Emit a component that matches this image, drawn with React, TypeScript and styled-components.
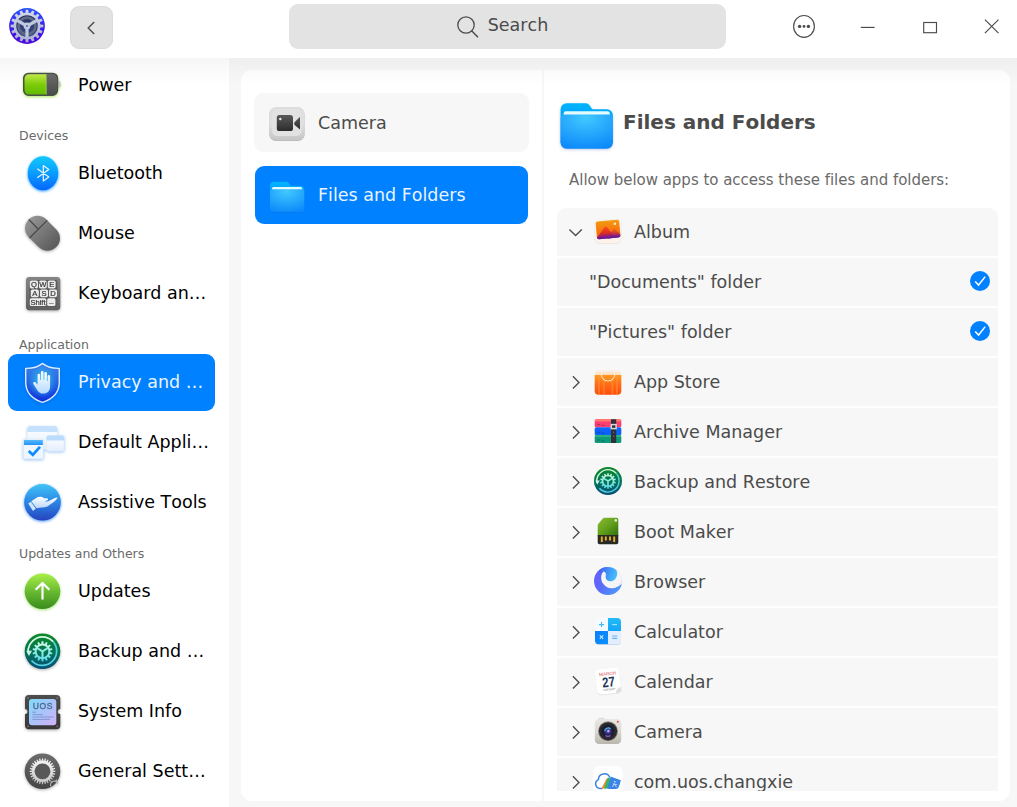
import React from "react";
import styled, { createGlobalStyle } from "styled-components";

const GlobalStyle = createGlobalStyle`
  * { box-sizing: border-box; }
  html, body { margin: 0; padding: 0; overflow: hidden; background: #fff; }
  body { font-family: "DejaVu Sans", sans-serif; font-size: 17.5px; font-kerning: none; color: #4b4b4b; }
  svg { display: block; flex: none; }
`;

/* ---------- Layout ---------- */

const Window = styled.div`
  display: flex;
  flex-direction: column;
  width: 1017px;
  height: 807px;
  background: #fff;
  overflow: hidden;
`;

const TitleBar = styled.header`
  display: flex;
  align-items: flex-start;
  height: 58px;
  flex: none;
  background: #fff;
  padding-left: 8px;
`;

const BackButton = styled.button`
  display: flex;
  align-items: center;
  justify-content: center;
  width: 43px;
  height: 43px;
  margin: 6px 0 0 24px;
  padding: 0 2px 0 0;
  border: 1px solid #dadada;
  border-radius: 9px;
  background: #e2e2e2;
`;

const SearchBox = styled.div`
  display: flex;
  align-items: center;
  justify-content: center;
  gap: 8px;
  width: 437px;
  height: 45px;
  margin: 4px 0 0 176px;
  padding: 0 11px 3px 0;
  border-radius: 9px;
  background: #e3e3e3;
`;

const WindowControls = styled.div`
  display: flex;
  align-items: center;
  gap: 39px;
  margin: 14px 0 0 66px;
`;

const Body = styled.div`
  position: relative;
  display: flex;
  height: 749px;
  &::before {
    content: "";
    position: absolute;
    inset: 0 0 auto 0;
    height: 26px;
    z-index: 2;
    pointer-events: none;
    background: linear-gradient(rgba(0, 0, 0, 0.034), rgba(0, 0, 0, 0));
  }
`;

const Sidebar = styled.nav`
  width: 229px;
  flex: none;
  height: 749px;
  overflow: hidden;
  background: #fff;
`;

const SidebarList = styled.div`
  display: flex;
  flex-direction: column;
  margin: -1px 14px 0 8px;
`;

const SectionLabel = styled.div<{ $tight?: boolean }>`
  height: ${(p) => (p.$tight ? 31 : 32)}px;
  padding: ${(p) => (p.$tight ? 13 : 14)}px 0 0 11px;
  font-size: 12.5px;
  line-height: 18px;
  white-space: nowrap;
  color: #6a6a6a;
`;

const Group = styled.div`
  display: flex;
  flex-direction: column;
  gap: 3px;
`;

const NavItem = styled.div<{ $active?: boolean }>`
  display: flex;
  height: 57px;
  padding: 4px 0 0 10px;
  gap: 12px;
  border-radius: 9px;
  line-height: 48px;
  white-space: nowrap;
  color: ${(p) => (p.$active ? "#eaf4ff" : "#000")};
  background: ${(p) => (p.$active ? "#0081ff" : "transparent")};
`;

const Content = styled.main`
  flex: 1;
  display: flex;
  padding: 12px 7px 6px 12px;
  background: #f7f7f7;
`;

const Panel = styled.div`
  display: flex;
  flex: 1;
  border-radius: 11px;
  background: #fff;
  overflow: hidden;
`;

const Categories = styled.section`
  display: flex;
  flex-direction: column;
  gap: 14px;
  width: 303px;
  flex: none;
  padding: 23px 13px 0;
  border-right: 2px solid #f7f7f7;
`;

const Category = styled.div<{ $active?: boolean }>`
  display: flex;
  align-items: flex-start;
  gap: 10px;
  height: ${(p) => (p.$active ? 58 : 59)}px;
  margin: ${(p) => (p.$active ? "0 0 0 1px" : "0 -1px 0 0")};
  width: ${(p) => (p.$active ? 273 : 275)}px;
  padding: ${(p) => (p.$active ? "8px 0 0 11px" : "9px 0 0 12px")};
  border-radius: 9px;
  line-height: 42px;
  color: ${(p) => (p.$active ? "#eaf4ff" : "#4b4b4b")};
  background: ${(p) => (p.$active ? "#0081ff" : "#f7f7f7")};
`;

const Detail = styled.section`
  display: flex;
  flex-direction: column;
  flex: 1;
  padding: 30px 12px 10px 13px;
`;

const DetailHeader = styled.div`
  display: flex;
  gap: 11px;
  height: 60px;
`;

const Title = styled.h1`
  margin: 0;
  font-size: 20px;
  line-height: 44px;
  font-weight: bold;
`;

const Hint = styled.p`
  margin: 10px 0 18px 12px;
  font-size: 15px;
  letter-spacing: -0.02px;
  line-height: 20px;
  color: #6a6a6a;
`;

const AppList = styled.div`
  display: flex;
  flex-direction: column;
  gap: 2px;
  flex: 1;
  min-height: 0;
  overflow: hidden;
  border-radius: 9px 9px 0 0;
`;

const AppRow = styled.div`
  display: flex;
  flex: none;
  height: 48px;
  padding-left: 11px;
  background: #f7f7f7;
  line-height: 48px;
`;

const AppIcon = styled.div`
  padding: 8px 10px 0 8px;
`;

const FolderRow = styled(AppRow)`
  justify-content: space-between;
  padding: 0 8px 0 32px;
`;

const CheckSlot = styled.div`
  padding-top: 13px;
`;

/* ---------- Shared drawings ---------- */

const polar = (cx: number, cy: number, r: number, deg: number) =>
  `${(cx + r * Math.cos((deg * Math.PI) / 180)).toFixed(2)} ${(cy + r * Math.sin((deg * Math.PI) / 180)).toFixed(2)}`;

function gearPath(cx: number, cy: number, outer: number, inner: number, teeth: number) {
  const step = 360 / teeth;
  let d = "";
  for (let i = 0; i < teeth; i++) {
    const a = i * step - 90;
    d += `${i ? "L" : "M"}${polar(cx, cy, inner, a - step * 0.3)}L${polar(cx, cy, outer, a - step * 0.2)}L${polar(cx, cy, outer, a + step * 0.2)}L${polar(cx, cy, inner, a + step * 0.3)}`;
  }
  return d + "Z";
}

type GradProps = { id: string; stops: string[]; diagonal?: boolean };
const Grad = ({ id, stops, diagonal }: GradProps) => (
  <linearGradient id={id} x1="0" y1="0" x2={diagonal ? "1" : "0"} y2="1">
    {stops.map((c, i) => (
      <stop key={i} offset={i / (stops.length - 1)} stopColor={c} />
    ))}
  </linearGradient>
);

const Glow = styled.svg<{ $glow: string }>`
  overflow: visible;
  filter: drop-shadow(0 1px 1.8px ${(p) => p.$glow});
`;

const Icon48 = ({ glow = "rgba(0,0,0,.32)", children }: { glow?: string; children: React.ReactNode }) => (
  <Glow $glow={glow} width="48" height="48" viewBox="0 0 48 48">{children}</Glow>
);

const Icon32 = ({ children }: { children: React.ReactNode }) => (
  <svg width="32" height="32" viewBox="0 0 32 32">{children}</svg>
);

/* ---------- Title bar icons ---------- */

const LogoSvg = styled.svg`
  margin-top: 7px;
`;

const AppLogo = () => (
  <LogoSvg width="38" height="38" viewBox="0 0 38 38">
    <defs>
      <Grad id="logoBg" stops={["#2b55ff", "#3a22ea", "#4b04dd"]} />
      <Grad id="logoGear" stops={["#d3d9ea", "#a9b0cf"]} />
      <Grad id="logoIn" stops={["#27335f", "#3c4a8c"]} />
    </defs>
    <circle cx="19" cy="19" r="17.9" fill="url(#logoBg)" />
    <path d={gearPath(19, 19, 16.4, 13.4, 16)} fill="url(#logoGear)" />
    <circle cx="19" cy="19" r="10.8" fill="url(#logoIn)" />
    <circle cx="19" cy="19" r="8.4" fill="none" stroke="#5f6a80" strokeWidth="2.6" />
    <g stroke="#c0c8de" strokeWidth="3.2">
      <path d="M19 19V30.5M19 19L9 13.3M19 19L29 13.3" />
    </g>
    <circle cx="19" cy="19" r="3.4" fill="#c3cbe2" />
    <circle cx="19" cy="19" r="1.1" fill="#5a68a8" />
  </LogoSvg>
);

const stroke = { fill: "none", stroke: "#4c4c4c", strokeWidth: 1.15 };

const SearchSvg = styled.svg`
  margin-top: 4px;
`;

const BackIcon = () => (
  <svg width="12" height="16" viewBox="0 0 12 16"><path d="M9.2 2L3.2 8L9.2 14" {...stroke} strokeWidth={1.4} /></svg>
);
const SearchIcon = () => (
  <SearchSvg width="24" height="24" viewBox="0 0 24 24">
    <circle cx="10" cy="10" r="8.2" {...stroke} strokeWidth={1.3} />
    <path d="M15.6 15.8L22 22.2" {...stroke} strokeWidth={1.5} />
  </SearchSvg>
);
const MenuIcon = () => (
  <svg width="24" height="26" viewBox="0 0 24 26">
    <ellipse cx="12" cy="12.4" rx="10.4" ry="10.9" {...stroke} />
    <g fill="#4c4c4c"><circle cx="7.6" cy="12.4" r="1.7" /><circle cx="12" cy="12.4" r="1.4" /><circle cx="16.4" cy="12.4" r="1.7" /></g>
  </svg>
);
const MinimizeIcon = () => (
  <svg width="24" height="26" viewBox="0 0 24 26"><path d="M5.8 13.4H19.6" {...stroke} /></svg>
);
const MaximizeIcon = () => (
  <svg width="24" height="26" viewBox="0 0 24 26"><rect x="5.7" y="8.5" width="12.8" height="10.2" {...stroke} /></svg>
);
const CloseIcon = () => (
  <svg width="24" height="26" viewBox="0 0 24 26"><path d="M3.9 5.6L17.5 19.2M17.5 5.6L3.9 19.2" {...stroke} /></svg>
);

/* ---------- Sidebar icons ---------- */

const PowerIcon = () => (
  <Icon48 glow="rgba(140,220,30,.7)">
    <defs><Grad id="batG" stops={["#c4ec4a", "#7ccc0a", "#62bb00"]} /><Grad id="batD" stops={["#6c6c6c", "#4a4a4a"]} /></defs>
    <g transform="translate(0 -1)">
      <path d="M40 20.5c2 .6 2.7 2 2.7 3.8s-.7 3.2-2.7 3.8z" fill="#c2c2c2" />
      <rect x="5.6" y="13.3" width="34" height="22" rx="5" fill="url(#batD)" stroke="#48504a" strokeWidth="1.2" />
      <path d="M11 14.2H28V34.5H11a4.4 4.4 0 0 1-4.4-4.4V18.6A4.4 4.4 0 0 1 11 14.2z" fill="url(#batG)" />
      <path d="M28.2 14.2v20.3" stroke="#a4df4b" strokeWidth=".8" />
    </g>
  </Icon48>
);
const BluetoothIcon = () => (
  <Icon48 glow="rgba(0,140,255,.85)">
    <defs><Grad id="bt" stops={["#12c9fb", "#0a9cff", "#0566ff"]} /></defs>
    <ellipse cx="25" cy="24.3" rx="15.2" ry="17" fill="url(#bt)" />
    <path d="M19.3 19.8L30.8 28L25.3 32V16.6L30.8 20.6L19.3 28.8" fill="none" stroke="#e9f7ff" strokeWidth="1.2" strokeLinejoin="round" />
  </Icon48>
);
const MouseIcon = () => (
  <Icon48>
    <defs><Grad id="mouse" stops={["#959595", "#777", "#5a5a5a"]} /></defs>
    <g transform="rotate(-45 24.5 24.3)">
      <rect x="12" y="4.8" width="25" height="39" rx="12.5" fill="url(#mouse)" />
      <path d="M12 18.5H37M24.5 4.8V18.5" stroke="#4b4b4b" strokeWidth="1.3" />
    </g>
  </Icon48>
);
const Key = ({ x, y, w, t }: { x: number; y: number; w: number; t: string }) => (
  <g>
    <rect x={x} y={y} width={w} height="7.8" rx="1.6" fill="#ececec" />
    <text x={x + w / 2} y={y + 6.6} fontSize="7.6" textAnchor="middle" fill="#333" stroke="#333" strokeWidth=".2" fontFamily="Liberation Sans">{t}</text>
  </g>
);
const KeyboardIcon = () => (
  <Icon48>
    <defs><Grad id="kb" stops={["#858585", "#5f5f5f"]} /></defs>
    <rect x="8" y="8" width="34.3" height="33.2" rx="3.4" fill="url(#kb)" />
    <rect x="11.4" y="11" width="28" height="27" rx="2" fill="#5c5c5c" />
    <Key x={11.8} y={11.6} w={8.2} t="Q" /><Key x={21} y={11.6} w={7.8} t="W" /><Key x={29.8} y={11.6} w={7.8} t="E" />
    <Key x={12.8} y={20.4} w={8} t="A" /><Key x={22} y={20.4} w={8} t="S" /><Key x={31} y={20.4} w={8} t="D" />
    <Key x={11.8} y={29.2} w={16.4} t="Shift" /><Key x={29.2} y={29.2} w={8.2} t="–" />
  </Icon48>
);
const PrivacyIcon = () => (
  <Icon48 glow="rgba(0,40,150,.2)">
    <defs>
      <Grad id="shield" stops={["#3a86e8", "#2263e2", "#0e2fdc"]} />
      <radialGradient id="shieldGlow" cx=".5" cy=".45" r=".5"><stop offset="0" stopColor="#32d2f5" /><stop offset="1" stopColor="#32b8f5" stopOpacity="0" /></radialGradient>
      <Grad id="hand" stops={["#ffffff", "#b6dbff"]} />
    </defs>
    <path d="M24.5 5.4C29 9 35 10.6 41.3 10.4V24C41.3 34.5 35 41 24.5 44.3C14 41 7.7 34.5 7.7 24V10.4C14 10.6 20 9 24.5 5.4Z" fill="url(#shield)" stroke="#d9eaff" strokeWidth="1.4" strokeLinejoin="round" />
    <path d="M24.5 8C29 11 34 12.6 39 12.4V24C39 33 34 38.5 24.5 41.8C15 38.5 10 33 10 24V12.4C15 12.6 20 11 24.5 8Z" fill="url(#shieldGlow)" />
    <path d="M19.6 25V16.6a1.3 1.3 0 0 1 2.5 0V22h.8V14.4a1.3 1.3 0 0 1 2.6 0V22h.8V15.3a1.3 1.3 0 0 1 2.6 0V23h.7V18a1.3 1.3 0 0 1 2.5 0V28.5C32.1 33 29.2 35.6 25.6 35.6C22.2 35.6 20.4 34.2 18.7 31.2L15.2 25.7C14.8 24.2 16.6 23.4 17.8 24.5L19.6 26.8Z" fill="url(#hand)" />
  </Icon48>
);
const DefaultAppsIcon = () => (
  <Icon48 glow="rgba(80,150,230,.5)">
    <defs><Grad id="win" stops={["#ffffff", "#e3eefd"]} /><Grad id="winBar" stops={["#58b9ff", "#2493fc"]} /></defs>
    <rect x="9.3" y="8" width="30" height="23.5" rx="3" fill="url(#win)" />
    <path d="M12.3 8H36.3a3 3 0 0 1 3 3V14H9.3V11a3 3 0 0 1 3-3z" fill="#c5e1fe" />
    <rect x="28.5" y="17.5" width="17.7" height="15.8" rx="2" fill="url(#win)" stroke="#d5e7fb" strokeWidth=".5" />
    <path d="M30.5 17.5H44.2a2 2 0 0 1 2 2V22.5H28.5V19.5a2 2 0 0 1 2-2z" fill="#bcdcfd" />
    <rect x="5.2" y="21.2" width="20.3" height="19.8" rx="2" fill="#eef6ff" stroke="#cfe3f8" strokeWidth=".6" />
    <path d="M6 22H24.8V27H6z" fill="url(#winBar)" />
    <path d="M10.7 33L14.8 36.8L22 28.8" fill="none" stroke="#0a8bff" strokeWidth="2.7" />
  </Icon48>
);
const AssistiveIcon = () => (
  <Icon48 glow="rgba(30,120,240,.75)">
    <defs><Grad id="assist" stops={["#40c4f8", "#2b85e4", "#2643bf"]} /><Grad id="palm" stops={["#ffffff", "#b9d6f8"]} /></defs>
    <circle cx="24.5" cy="24.3" r="18.3" fill="url(#assist)" />
    <path d="M13.3 23.3L19 19.4C22 18.2 24.5 19 27 20.4C29.2 20 30.5 20.7 30 22L26.5 23.5L29.8 23.6L36.8 20C38.2 19.4 39.8 19.2 39.2 20.6C37 23.8 33 26.2 29.5 28.4C26 29.8 22.5 29 18.6 30.2Z" fill="url(#palm)" />
    <path d="M10.2 25.4L12.8 23.8L17.8 30.6L15 33Z" fill="#cfe3fb" />
  </Icon48>
);
const UpdatesIcon = () => (
  <Icon48 glow="rgba(110,210,40,.65)">
    <defs><Grad id="upd" stops={["#a9ef48", "#69bb31", "#3a8b1d"]} /></defs>
    <circle cx="24.5" cy="24.3" r="17.8" fill="url(#upd)" />
    <path d="M24.5 32.5V16.6M17.6 22.8L24.5 16L31.4 22.8" fill="none" stroke="#fff" strokeWidth="2.2" />
  </Icon48>
);

const RestoreArt = ({ id, cx, cy, r }: { id: string; cx: number; cy: number; r: number }) => {
  const k = r / 17.8;
  return (
    <g transform={`translate(${cx} ${cy}) scale(${k})`}>
      <defs><Grad id={id} stops={["#0b8a28", "#037553", "#064f78"]} /><Grad id={id + "w"} stops={["#d9fbe6", "#52dbea"]} /></defs>
      <circle r="17.8" fill={`url(#${id})`} />
      <g fill="none" stroke="#8fe9e0" strokeWidth="1.7">
        <path d={`M${polar(0, 0, 14.4, 172)}A14.4 14.4 0 0 1 ${polar(0, 0, 14.4, 318)}`} stroke="#d9fbe6" />
        <path d={`M${polar(0, 0, 14.4, 318)}A14.4 14.4 0 0 1 ${polar(0, 0, 14.4, 140)}`} stroke="#58cfe0" />
        <path d="M0 0V7M0 0L-6 -3.6M0 0L6 -3.6" strokeWidth="2" />
      </g>
      <path d="M-16.2 -.6H-10.4L-13.6 4.8Z" fill="#c4f5e6" />
      <path fillRule="evenodd" d={gearPath(0, 0, 10, 7.8, 14) + "M5.9 0A5.9 5.9 0 1 0 -5.9 0A5.9 5.9 0 1 0 5.9 0Z"} fill={`url(#${id}w)`} />
    </g>
  );
};
const BackupIcon = () => (
  <Icon48><RestoreArt id="bk48" cx={24.5} cy={24.3} r={17.8} /></Icon48>
);
const SystemInfoIcon = () => (
  <Icon48>
    <defs><Grad id="uos" diagonal stops={["#7fdcf8", "#a9c4fb", "#d2b2f8"]} /><Grad id="chip" stops={["#4d4d4d", "#383838"]} /></defs>
    <path d="M11 8H38.3a4 4 0 0 1 4 4V22a2.4 2.4 0 0 0 0 5V38.3a4 4 0 0 1-4 4H11a4 4 0 0 1-4-4V27a2.4 2.4 0 0 0 0-5V12a4 4 0 0 1 4-4z" fill="url(#chip)" />
    <rect x="11" y="12" width="27.3" height="26.3" rx="3" fill="url(#uos)" />
    <text x="24.9" y="22" fontSize="8.6" letterSpacing=".6" textAnchor="middle" fill="#4b6c93" stroke="#4b6c93" strokeWidth=".35" fontFamily="Liberation Sans">UOS</text>
    <path d="M14.3 25.2H18M14.3 27.6H25M14.3 30H35.5M14.3 32.4H32" stroke="#7d92c9" strokeWidth=".9" />
    <g fill="#777"><circle cx="10" cy="11" r=".9" /><circle cx="39.3" cy="11" r=".9" /><circle cx="10" cy="39.3" r=".9" /><circle cx="39.3" cy="39.3" r=".9" /></g>
  </Icon48>
);
const GeneralIcon = () => (
  <Icon48>
    <defs><Grad id="gen" stops={["#6d6d6d", "#444"]} /><Grad id="genG" stops={["#f6f6f6", "#c4c4c4"]} /></defs>
    <circle cx="24.5" cy="24.3" r="17.8" fill="url(#gen)" />
    <path d={gearPath(24.5, 24.3, 12.9, 10.7, 28)} fill="url(#genG)" />
    <circle cx="24.5" cy="24.3" r="7.9" fill="#585858" />
    <path d="M32.8 39.4C32 37 33 34.6 35.4 34.2C37.8 33.8 39.5 35 39.8 36.6M33 34.4L34.4 35.6M38.8 32.5L37.8 34.4" fill="none" stroke="#b5b5b5" strokeWidth="1.1" />
  </Icon48>
);

/* ---------- Category icons ---------- */

const VideoIcon = () => (
  <svg width="42" height="44" viewBox="0 0 42 44">
    <defs><Grad id="vidBg" stops={["#dddddd", "#e0e0e0", "#c6c6c6"]} /><Grad id="vid" stops={["#5a5a5a", "#2c2c2c"]} /></defs>
    <rect x="3.2" y="6" width="35.4" height="33" rx="6.5" fill="#bcbcbc" />
    <rect x="3.2" y="5" width="35.4" height="33" rx="6.5" fill="url(#vidBg)" />
    <rect x="6.2" y="7" width="29.4" height="27" rx="5" fill="#e2e2e2" />
    <rect x="10.8" y="13" width="16.2" height="16" rx="2.6" fill="url(#vid)" />
    <path d="M28.3 20.5L34 14.7V27.5L28.3 22.8z" fill="url(#vid)" />
    <circle cx="14.3" cy="17" r="1.2" fill="#eee" />
  </svg>
);

const FolderArt = ({ id }: { id: string }) => (
  <>
    <defs>
      <Grad id={id + "b"} stops={["#00b4ff", "#0a86ee"]} />
      <radialGradient id={id} cx=".48" cy=".1" r=".95"><stop offset="0" stopColor="#42c8ff" /><stop offset="1" stopColor="#0b88fa" /></radialGradient>
    </defs>
    <path d="M6 0H24.5C28 0 29.2 2 30.5 4.2C31.3 5.6 32 6 33.5 6H46.5A6 6 0 0 1 52.5 12V40H0V6A6 6 0 0 1 6 0Z" fill={`url(#${id}b)`} />
    <path d="M3 16V10.5A2.5 2.5 0 0 1 5.5 8H47A2.5 2.5 0 0 1 49.5 10.5V16Z" fill="#e2fbff" />
    <path d="M0 14.5Q.3 11.6 3.5 11.2H49Q52.2 11.6 52.5 14.5V40A6 6 0 0 1 46.5 46H6A6 6 0 0 1 0 40Z" fill={`url(#${id})`} />
  </>
);
const SmallFolder = () => (
  <svg width="42" height="42" viewBox="0 0 42 42">
    <ellipse cx="21" cy="37.8" rx="16" ry="1.3" fill="#0667d4" opacity=".5" />
    <g transform="translate(4 7.8) scale(.652 .66)"><FolderArt id="fs" /></g>
  </svg>
);
const BigFolder = () => (
  <Glow $glow="rgba(0,60,150,.25)" width="55" height="56" viewBox="0 0 55 56">
    <g transform="translate(3.6 3.3) scale(.995 .99)"><FolderArt id="fb" /></g>
  </Glow>
);

/* ---------- App icons ---------- */

const AlbumIcon = () => (
  <Icon32>
    <defs>
      <Grad id="alb" stops={["#f39a10", "#f67a10", "#f4650f"]} />
      <Grad id="alm" stops={["#ff4a1c", "#e0301f", "#5a12b0"]} />
      <Grad id="alm2" stops={["#f9651a", "#c93a3a", "#4a10b8"]} />
    </defs>
    <rect x="2.7" y="3.6" width="26.6" height="24.2" rx="4.5" fill="#dedede" />
    <rect x="3" y="3.3" width="26" height="24" rx="4.5" fill="#fdf3ea" />
    <g transform="rotate(-5 16 14)">
      <rect x="4.3" y="4.6" width="23.6" height="17.8" rx="2" fill="url(#alb)" />
      <path d="M15 22L21 13.6Q22 12.8 23 13.8L27.9 19.5V20.4A2 2 0 0 1 25.9 22.4H15z" fill="url(#alm2)" />
      <path d="M4.3 20.4L12.8 11Q14 10 15.2 11.2L23 22.4H6.3A2 2 0 0 1 4.3 20.4Z" fill="url(#alm)" />
      <circle cx="23.4" cy="8.4" r="1.3" fill="#ffe9b4" />
    </g>
  </Icon32>
);
const StoreIcon = () => (
  <Icon32>
    <defs><Grad id="st" stops={["#ff9a1e", "#ff6a14", "#ff4d0a"]} /><Grad id="stT" stops={["#f9f4ee", "#fbd9b4"]} /></defs>
    <path d="M4.4 4H27.6L29.3 9.5H2.7z" fill="url(#stT)" />
    <path d="M2.7 9H29.3V25a3.7 3.7 0 0 1-3.7 3.7H6.4A3.7 3.7 0 0 1 2.7 25z" fill="url(#st)" />
    <path d="M7 9V28.5M11.8 9V28.5M20.4 9V28.5M25 9V28.5" stroke="#ff9040" strokeWidth="2" opacity=".5" />
    <path d="M8.8 6C9 11.6 12 15 16 15S23 11.6 23.2 6" fill="none" stroke="#ffe9cc" strokeWidth="1.1" />
  </Icon32>
);
const ArchiveIcon = () => (
  <Icon32>
    <rect x="2.7" y="3.3" width="26.6" height="8" rx="1.6" fill="#fb3d73" />
    <path d="M4 3.3H28L29.3 5.5H2.7z" fill="#ff7a6c" />
    <rect x="2.7" y="11.3" width="26.6" height="8" rx="1.6" fill="#0b63fb" />
    <rect x="2.7" y="19" width="26.6" height="8" rx="1.6" fill="#0f9a7a" />
    <path d="M3.3 20H28.7" stroke="#38bd86" strokeWidth="1.4" />
    <path d="M5 8.6H8.3M9.5 9.4H12.5M5 16.4H8.3M9.5 17.2H12.5M5 24H8.3M9.5 24.8H12.5" stroke="#123" strokeWidth="1" opacity=".35" />
    <rect x="19" y="3.3" width="5.2" height="23.7" fill="#2f3136" />
    <rect x="19.3" y="8.6" width="4.8" height="4" fill="none" stroke="#d8d8d8" strokeWidth="1.5" />
    <path d="M21.6 15.5V17M21.6 19.5V21" stroke="#777" strokeWidth=".8" />
  </Icon32>
);
const RestoreAppIcon = () => <Icon32><RestoreArt id="bk32" cx={16} cy={15} r={14} /></Icon32>;
const BootIcon = () => (
  <Icon32>
    <defs><Grad id="sd" diagonal stops={["#8fbc2e", "#62a01c", "#2f6d0c"]} /></defs>
    <path d="M12.6 1.7H24.5a1.8 1.8 0 0 1 1.8 1.8V20H5.7V9.5a3 3 0 0 1 .9-2.1L10.8 2.6A2.6 2.6 0 0 1 12.6 1.7z" fill="url(#sd)" />
    <path d="M5.7 19H26.3V26.5a1.8 1.8 0 0 1-1.8 1.8H7.5a1.8 1.8 0 0 1-1.8-1.8z" fill="#2a2a26" />
    <path d="M9.8 20.5V26M13.8 20.5V24.5M18 20.5V24.5M22.2 20.5V26" stroke="#e6b422" strokeWidth="1.9" />
    <circle cx="23.8" cy="4.4" r="1.3" fill="#e6f2d4" />
  </Icon32>
);
const BrowserIcon = () => (
  <Icon32>
    <defs>
      <Grad id="br" diagonal stops={["#6a5cf6", "#5a6cfb", "#4aa6fb"]} />
      <linearGradient id="br2" x1="0" y1="0" x2="1" y2=".3"><stop offset="0" stopColor="#4b52f2" /><stop offset=".5" stopColor="#3f8ef8" /><stop offset="1" stopColor="#46bdfc" /></linearGradient>
    </defs>
    <circle cx="16.4" cy="15.2" r="13.9" fill="#e4e6ec" />
    <path d="M16 1C8 1 2 7.3 2 15C2 22.8 8.2 29 16 29C22.8 29 28.4 24.3 29.8 18C26 21 23 22.6 19 22C12 21 9 15 10 8L16 1Z" fill="url(#br)" />
    <path d="M7 4.2C12 0 20 -.2 24.2 4C27 8.4 24 15.4 18.4 15.4C14.8 15.4 12.8 12.6 13.6 9.4C14 7.6 13.4 5.8 11.4 5.8C9.8 5.8 9 7.6 8.6 9Z" fill="url(#br2)" />
    <path d="M11.6 5.4C8.6 8.4 8.4 13.6 11 17.6C14.4 22.8 20.8 23.6 25.2 20.4C28 18.4 29.6 15.6 29.8 12.6C29.4 9.4 27.8 6.4 25 4.4C26.6 9.8 23.4 15.4 18.4 15.4C14.8 15.4 12.8 12.6 13.6 9.4C14 7.6 13.2 5.8 11.6 5.4Z" fill="#f3f5f9" />
  </Icon32>
);
const CalculatorIcon = () => (
  <Icon32>
    <defs>
      <clipPath id="calcClip"><rect x="3" y="2" width="26" height="26.3" rx="4" /></clipPath>
      <Grad id="cB" stops={["#22bdf6", "#16a4fb"]} /><Grad id="cD" diagonal stops={["#0a7dfa", "#0a92ff"]} />
    </defs>
    <rect x="3" y="2.6" width="26" height="26.3" rx="4" fill="#c9d6e6" />
    <g clipPath="url(#calcClip)">
      <rect x="3" y="2" width="13" height="13.2" fill="#f5fbff" />
      <rect x="16" y="2" width="13" height="13.2" fill="url(#cB)" />
      <rect x="3" y="15" width="13" height="13.4" fill="url(#cD)" />
      <rect x="16" y="15" width="13" height="13.4" fill="#e2eefe" />
    </g>
    <path d="M7 8.6H12M9.5 6.1V11.1" stroke="#3cbdf8" strokeWidth="1.1" />
    <path d="M20.2 8.6H25" stroke="#a8e6ff" strokeWidth="1.1" />
    <path d="M7.8 19.4L11.2 22.8M11.2 19.4L7.8 22.8" stroke="#cfe7ff" strokeWidth="1.1" />
    <path d="M20.2 20H25.2M20.2 22.4H25.2" stroke="#65b2fb" strokeWidth="1.1" />
  </Icon32>
);
const CalendarIcon = () => (
  <Icon32>
    <g transform="rotate(-6 16 15)">
      <rect x="4" y="3.4" width="24.6" height="25" rx="4.2" fill="#dedede" />
      <path d="M8.4 2.6H24A4.4 4.4 0 0 1 28.4 7V22L22.5 27.8H8.4A4.4 4.4 0 0 1 4 23.4V7A4.4 4.4 0 0 1 8.4 2.6z" fill="#fff" />
      <text x="16.3" y="9.4" fontSize="4.6" textAnchor="middle" fill="#e0484e" fontFamily="Liberation Sans">MARCH</text>
      <text x="16.3" y="20.9" fontSize="14" fontWeight="bold" textAnchor="middle" textLength="12.6" lengthAdjust="spacingAndGlyphs" fill="#1d3557" fontFamily="Liberation Sans">27</text>
      <text x="16.3" y="24.4" fontSize="2.6" textAnchor="middle" fill="#456" fontFamily="Liberation Sans">TUESDAY</text>
      <path d="M28.4 22L22.5 27.8Q23.2 23.4 28.4 22z" fill="#dcdcdc" />
    </g>
  </Icon32>
);
const CameraIcon = () => (
  <Icon32>
    <defs><Grad id="cam" stops={["#e9e8e4", "#dad8d2", "#b9b5ac"]} /><radialGradient id="lens"><stop offset="0" stopColor="#5d6fd0" /><stop offset=".45" stopColor="#2c2a70" /><stop offset="1" stopColor="#15151f" /></radialGradient></defs>
    <rect x="6.5" y="1.8" width="6" height="3" rx="1" fill="#dcdad5" />
    <rect x="2.8" y="2.9" width="26.4" height="25.2" rx="4.4" fill="url(#cam)" />
    <circle cx="16" cy="15.3" r="10" fill="#8b8a88" />
    <circle cx="16" cy="15.3" r="9.1" fill="#29292e" />
    <circle cx="16" cy="15.3" r="6" fill="url(#lens)" />
    <path d="M12.8 15.2A3.3 3.3 0 0 1 18.5 13" fill="none" stroke="#45c4e0" strokeWidth="1.2" />
    <path d="M13.4 19.5Q16 21.4 18.6 19.5" fill="none" stroke="#8a55c4" strokeWidth="1.4" />
    <circle cx="16.4" cy="15" r="1.2" fill="#d49af0" />
    <circle cx="25.8" cy="5.8" r="1" fill="#e44" />
  </Icon32>
);
const ChangxieIcon = () => (
  <Icon32>
    <rect x="1.2" y="0" width="29.6" height="32" rx="6" fill="#fff" />
    <path d="M10.5 22.4H8A4.6 4.6 0 0 1 6.4 13.6A5.9 5.9 0 0 1 17.8 11.6" fill="none" stroke="#3c82e6" strokeWidth="1.5" />
    <path d="M9.4 22.6L14.6 12.4L16 12.8L13.8 22.6z" fill="#f08a3c" />
    <path d="M12 22.6L15.8 11.6L19 12.2L16.8 22.6z" fill="#35b56a" />
    <path d="M18.6 10.6L28.9 14.2Q27.8 18.8 26 22.4Q20 23.6 15.2 22.5Q17.6 16.6 18.6 10.6z" fill="#3a84e4" />
    <path d="M21.8 15.2L24.2 16M21 18.2L25.2 18.6M22.6 16.5L20.5 21M22.6 18.5L24.5 21" stroke="#cfe2fb" strokeWidth=".8" />
  </Icon32>
);

const Chevron = ({ open }: { open?: boolean }) => (
  <svg width="16" height="48" viewBox="0 0 16 48">
    <path d={open ? "M1.4 21.4L7.6 27.6L13.8 21.4" : "M4.9 18.3L11 24.4L4.9 30.5"} fill="none" stroke="#4c4c4c" strokeWidth="1.35" />
  </svg>
);
const CheckMark = () => (
  <svg width="20" height="20" viewBox="0 0 20 20">
    <circle cx="10" cy="10" r="10" fill="#0081ff" />
    <path d="M5.2 10.4L8.6 14L15.2 5.6" fill="none" stroke="#fff" strokeWidth="1.5" />
  </svg>
);

/* ---------- Data ---------- */

type Entry = { label: string; icon: React.ReactNode; active?: boolean };

const groups: { title?: string; items: Entry[] }[] = [
  { items: [{ label: "Power", icon: <PowerIcon /> }] },
  {
    title: "Devices",
    items: [
      { label: "Bluetooth", icon: <BluetoothIcon /> },
      { label: "Mouse", icon: <MouseIcon /> },
      { label: "Keyboard an…", icon: <KeyboardIcon /> },
    ],
  },
  {
    title: "Application",
    items: [
      { label: "Privacy and …", icon: <PrivacyIcon />, active: true },
      { label: "Default Appli…", icon: <DefaultAppsIcon /> },
      { label: "Assistive Tools", icon: <AssistiveIcon /> },
    ],
  },
  {
    title: "Updates and Others",
    items: [
      { label: "Updates", icon: <UpdatesIcon /> },
      { label: "Backup and …", icon: <BackupIcon /> },
      { label: "System Info", icon: <SystemInfoIcon /> },
      { label: "General Sett…", icon: <GeneralIcon /> },
    ],
  },
];

const apps: (Entry & { folders?: string[] })[] = [
  { label: "Album", icon: <AlbumIcon />, folders: ['"Documents" folder', '"Pictures" folder'] },
  { label: "App Store", icon: <StoreIcon /> },
  { label: "Archive Manager", icon: <ArchiveIcon /> },
  { label: "Backup and Restore", icon: <RestoreAppIcon /> },
  { label: "Boot Maker", icon: <BootIcon /> },
  { label: "Browser", icon: <BrowserIcon /> },
  { label: "Calculator", icon: <CalculatorIcon /> },
  { label: "Calendar", icon: <CalendarIcon /> },
  { label: "Camera", icon: <CameraIcon /> },
  { label: "com.uos.changxie", icon: <ChangxieIcon /> },
];

export default function App() {
  return (
    <Window>
      <GlobalStyle />
      <TitleBar>
        <AppLogo />
        <BackButton><BackIcon /></BackButton>
        <SearchBox><SearchIcon /><span>Search</span></SearchBox>
        <WindowControls><MenuIcon /><MinimizeIcon /><MaximizeIcon /><CloseIcon /></WindowControls>
      </TitleBar>
      <Body>
        <Sidebar>
          <SidebarList>
            {groups.map((g, i) => (
              <React.Fragment key={i}>
                {g.title && <SectionLabel $tight={i === 1}>{g.title}</SectionLabel>}
                <Group>
                  {g.items.map((it) => (
                    <NavItem key={it.label} $active={it.active}>{it.icon}<span>{it.label}</span></NavItem>
                  ))}
                </Group>
              </React.Fragment>
            ))}
          </SidebarList>
        </Sidebar>
        <Content>
          <Panel>
            <Categories>
              <Category><VideoIcon /><span>Camera</span></Category>
              <Category $active><SmallFolder /><span>Files and Folders</span></Category>
            </Categories>
            <Detail>
              <DetailHeader><BigFolder /><Title>Files and Folders</Title></DetailHeader>
              <Hint>Allow below apps to access these files and folders:</Hint>
              <AppList>
                {apps.map((a) => (
                  <React.Fragment key={a.label}>
                    <AppRow><Chevron open={!!a.folders} /><AppIcon>{a.icon}</AppIcon><span>{a.label}</span></AppRow>
                    {a.folders?.map((f) => (
                      <FolderRow key={f}><span>{f}</span><CheckSlot><CheckMark /></CheckSlot></FolderRow>
                    ))}
                  </React.Fragment>
                ))}
              </AppList>
            </Detail>
          </Panel>
        </Content>
      </Body>
    </Window>
  );
}
